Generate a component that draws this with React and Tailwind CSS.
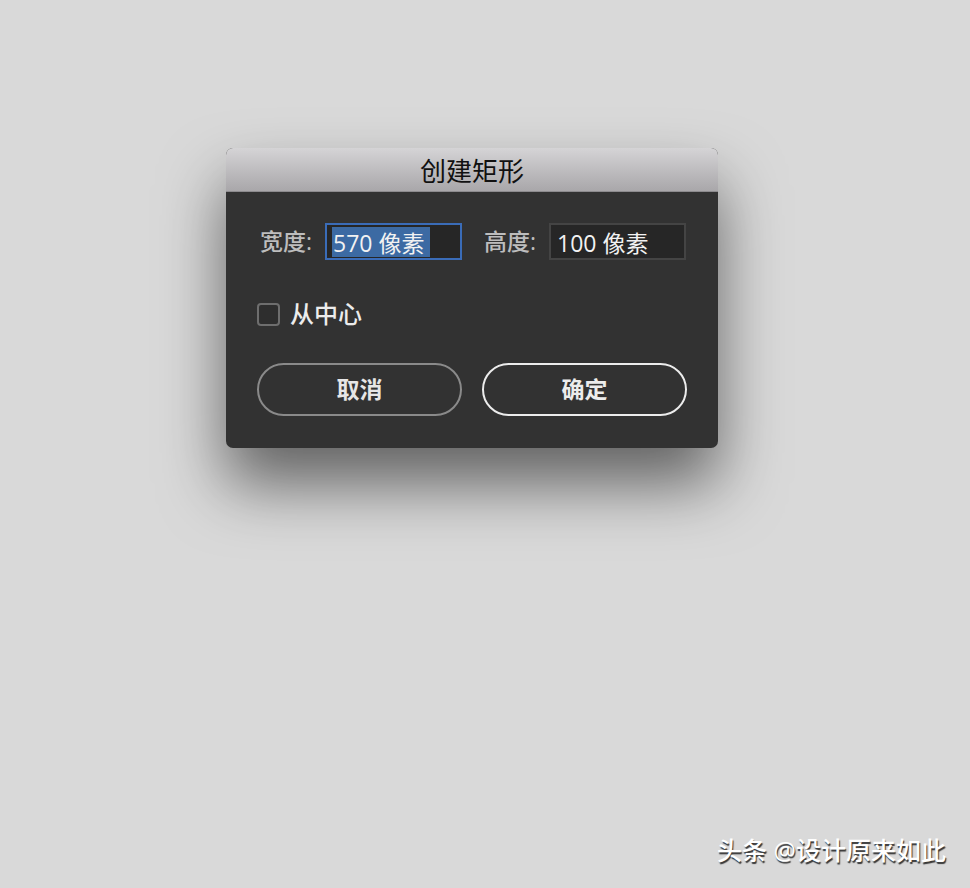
import React, { useState } from 'react';

const CJK = "font-['Open_Sans','PingFang_SC','Noto_Sans_CJK_SC',sans-serif]";

const SizeField = ({ label, value, active }) => (
  <div className="flex items-center">
    <span className="w-[65px] text-[23px] leading-none font-medium text-[#bdbdbd]">{label}</span>
    <div
      className={`w-[137px] h-[37px] flex items-center px-[5px] bg-[#262626] border-2 ${
        active ? 'border-[#3a6cb8]' : 'border-[#444444]'
      }`}
    >
      <span
        className={`text-[23px] leading-[28px] text-[#f2f2f2] pl-[1px] pr-[6px] pt-[2px] ${
          active ? 'bg-[#3c6aa3]' : ''
        }`}
      >
        {value}
      </span>
    </div>
  </div>
);

export default function App() {
  const [fromCenter, setFromCenter] = useState(false);

  return (
    <div className={`w-[970px] h-[888px] bg-[#d9d9d9] flex flex-col ${CJK}`}>
      <div className="pt-[148px] pl-[226px]">
        {/* Dialog */}
        <div className="w-[492px] h-[300px] rounded-[7px] overflow-hidden bg-[#323232] shadow-[0_36px_64px_rgba(0,0,0,0.55)] flex flex-col">
          {/* Title bar */}
          <div className="h-[44px] shrink-0 bg-gradient-to-b from-[#d5d4d6] to-[#a9a7aa] border-b border-[#8d8b8e] flex items-center justify-center">
            <span className="text-[26px] leading-none text-[#111111] pt-[2px]">创建矩形</span>
          </div>

          {/* Body */}
          <div className="flex flex-col px-[31px] pt-[31px]">
            <div className="flex items-center gap-[22px] pl-[3px]">
              <SizeField label="宽度:" value="570 像素" active />
              <SizeField label="高度:" value="100 像素" />
            </div>

            <label className="flex items-center mt-[42px] cursor-pointer">
              <button
                onClick={() => setFromCenter(!fromCenter)}
                className="w-[23px] h-[23px] rounded-[4px] border-2 border-[#6e6e6e] bg-[#2e2e2e] flex items-center justify-center"
              >
                {fromCenter && <span className="text-[14px] text-white leading-none">✓</span>}
              </button>
              <span className="ml-[10px] text-[24px] leading-none font-medium text-[#ececec]">从中心</span>
            </label>

            <div className="flex justify-between mt-[37px]">
              <button className="w-[205px] h-[53px] rounded-full border-2 border-[#8a8a8a] text-[23px] font-bold text-[#e6e6e6]">
                取消
              </button>
              <button className="w-[205px] h-[53px] rounded-full border-2 border-[#ececec] text-[23px] font-bold text-[#ececec]">
                确定
              </button>
            </div>
          </div>
        </div>
      </div>

      {/* Watermark */}
      <div className="mt-auto self-end mr-[24px] mb-[25px] text-[25px] leading-none font-medium text-white [text-shadow:1px_2px_1px_rgba(0,0,0,0.75)]">
        头条 @设计原来如此
      </div>
    </div>
  );
}
